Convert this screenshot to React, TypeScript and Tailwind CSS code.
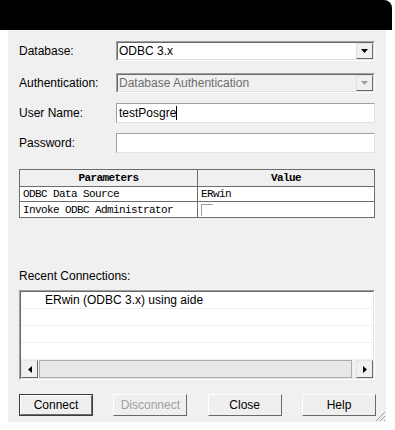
import React from "react";

const ui = { fontFamily: '"Liberation Sans", Arial, sans-serif' };
const mono = { fontFamily: '"Liberation Mono", "DejaVu Sans Mono", monospace' };

// sunken 3D frame used by edit fields, combos and the list
function Sunken({ className = "", children }: { className?: string; children?: React.ReactNode }) {
  return (
    <div className={`border border-t-[#a0a0a0] border-l-[#a0a0a0] border-b-white border-r-white ${className}`}>
      <div className="h-full border border-t-[#696969] border-l-[#696969] border-b-[#e3e3e3] border-r-[#e3e3e3]">
        {children}
      </div>
    </div>
  );
}

function Arrow({ dir, color = "#000" }: { dir: "down" | "left" | "right"; color?: string }) {
  const pts = dir === "down" ? "0,0 7,0 3.5,4" : dir === "left" ? "4,0 4,7 0,3.5" : "0,0 0,7 4,3.5";
  const w = dir === "down" ? 7 : 4;
  const h = dir === "down" ? 4 : 7;
  return (
    <svg width={w} height={h} viewBox={`0 0 ${w} ${h}`}>
      <polygon points={pts} fill={color} />
    </svg>
  );
}

function RaisedBox({ className = "", children }: { className?: string; children?: React.ReactNode }) {
  return (
    <div className={`flex items-center justify-center bg-[#f0f0f0] border border-t-[#e3e3e3] border-l-[#e3e3e3] border-b-[#696969] border-r-[#696969] ${className}`}>
      {children}
    </div>
  );
}

function Combo({ value, disabled }: { value: string; disabled?: boolean }) {
  return (
    <Sunken className="w-[259px] h-[20px]">
      <div className={`flex h-full ${disabled ? "bg-[#f0f0f0]" : "bg-white"}`}>
        <div className={`flex-1 pl-[1px] text-[12px] leading-[16px] ${disabled ? "text-[#6d6d6d]" : "text-black"}`}>
          {value}
        </div>
        <RaisedBox className="w-[17px] h-full">
          <Arrow dir="down" color={disabled ? "#a0a0a0" : "#000"} />
        </RaisedBox>
      </div>
    </Sunken>
  );
}

function Edit({ value, caret }: { value?: string; caret?: boolean }) {
  return (
    <div className="w-[259px] h-[20px] bg-white border border-t-[#a0a0a0] border-l-[#a0a0a0] border-b-[#e3e3e3] border-r-[#e3e3e3]">
      <div className="flex items-center h-full pl-[2px] text-[12px] text-black">
        {value}
        {caret && <span className="inline-block w-[1px] h-[14px] bg-black" />}
      </div>
    </div>
  );
}

function Row({ label, children, className = "" }: { label: string; children: React.ReactNode; className?: string }) {
  return (
    <div className={`flex items-center ${className}`}>
      <div className="w-[97px] text-[12px] text-black">{label}</div>
      {children}
    </div>
  );
}

function Btn({ label, disabled, primary }: { label: string; disabled?: boolean; primary?: boolean }) {
  return (
    <div className={`h-[22px] ${primary ? "border border-[#3c3c3c]" : ""}`}>
      <div
        className={`flex items-center justify-center h-full bg-[#efefef] border border-t-white border-l-white border-b-[#696969] border-r-[#696969] text-[12px] ${
          disabled ? "text-[#a0a0a0]" : "text-black"
        }`}
      >
        {label}
      </div>
    </div>
  );
}

export default function App() {
  const recent = ["ERwin (ODBC 3.x) using aide", "", "", ""];

  return (
    <div className="w-[395px] h-[430px] bg-white overflow-hidden" style={ui}>
      <div className="w-[392px] h-[30px] bg-black rounded-tr-[8px]" />

      <div className="flex">
        <div className="w-[8px]" />
        <div className="relative w-[378px] h-[392px] bg-[#f0f0f0] pl-[11px] pt-[11px]">
          <Row label="Database:">
            <Combo value="ODBC 3.x" />
          </Row>
          <Row label="Authentication:" className="mt-[12px]">
            <Combo value="Database Authentication" disabled />
          </Row>
          <Row label="User Name:" className="mt-[10px]">
            <Edit value="testPosgre" caret />
          </Row>
          <Row label="Password:" className="mt-[10px]">
            <Edit />
          </Row>

          {/* parameters grid */}
          <table
            className="mt-[16px] w-[356px] border-collapse border border-[#6d6d6d] text-[11px] tracking-[-0.6px] leading-[14px] text-black"
            style={mono}
          >
            <thead>
              <tr className="h-[17px] bg-[#f0f0f0]">
                <th className="w-[178px] border border-[#6d6d6d] font-bold text-center p-0">Parameters</th>
                <th className="border border-[#6d6d6d] font-bold text-center p-0">Value</th>
              </tr>
            </thead>
            <tbody>
              <tr className="h-[15px] bg-white">
                <td className="border border-[#6d6d6d] pl-[3px] p-0">ODBC Data Source</td>
                <td className="border border-[#6d6d6d] pl-[3px] p-0">ERwin</td>
              </tr>
              <tr className="h-[16px] bg-white">
                <td className="border border-[#6d6d6d] pl-[3px] p-0">Invoke ODBC Administrator</td>
                <td className="border border-[#6d6d6d] pl-[3px] p-0">
                  <div className="w-[12px] h-[12px] bg-white border-t border-l border-[#a0a0a0]" />
                </td>
              </tr>
            </tbody>
          </table>

          <div className="mt-[51px] text-[12px] leading-[15px] text-black">Recent Connections:</div>

          <Sunken className="mt-[6px] w-[356px] h-[90px]">
            <div className="flex flex-col h-full bg-white">
              {recent.map((r, i) => (
                <div key={i} className="h-[17px] shrink-0 border-b border-[#f0f0f0] pl-[24px] text-[12px] leading-[16px] text-black">
                  {r}
                </div>
              ))}
              <div className="flex flex-1 bg-[#f0f0f0]">
                <RaisedBox className="w-[17px] h-full">
                  <Arrow dir="left" />
                </RaisedBox>
                <div className="flex-1 mx-[1px] bg-[#e8e8e8] border border-[#adadad]" />
                <div className="w-[3px]" />
                <RaisedBox className="w-[17px] h-full">
                  <Arrow dir="right" />
                </RaisedBox>
              </div>
            </div>
          </Sunken>

          <div className="mt-[14px] flex w-[357px] justify-between">
            <div className="w-[74px]"><Btn label="Connect" primary /></div>
            <div className="w-[74px]"><Btn label="Disconnect" disabled /></div>
            <div className="w-[74px]"><Btn label="Close" /></div>
            <div className="w-[74px]"><Btn label="Help" /></div>
          </div>

          {/* size grip */}
          <svg className="absolute right-0 bottom-0" width="12" height="12" viewBox="0 0 12 12">
            <line x1="11" y1="2" x2="2" y2="11" stroke="#a0a0a0" />
            <line x1="11" y1="6" x2="6" y2="11" stroke="#a0a0a0" />
            <line x1="11" y1="10" x2="10" y2="11" stroke="#a0a0a0" />
          </svg>
        </div>
      </div>
    </div>
  );
}
